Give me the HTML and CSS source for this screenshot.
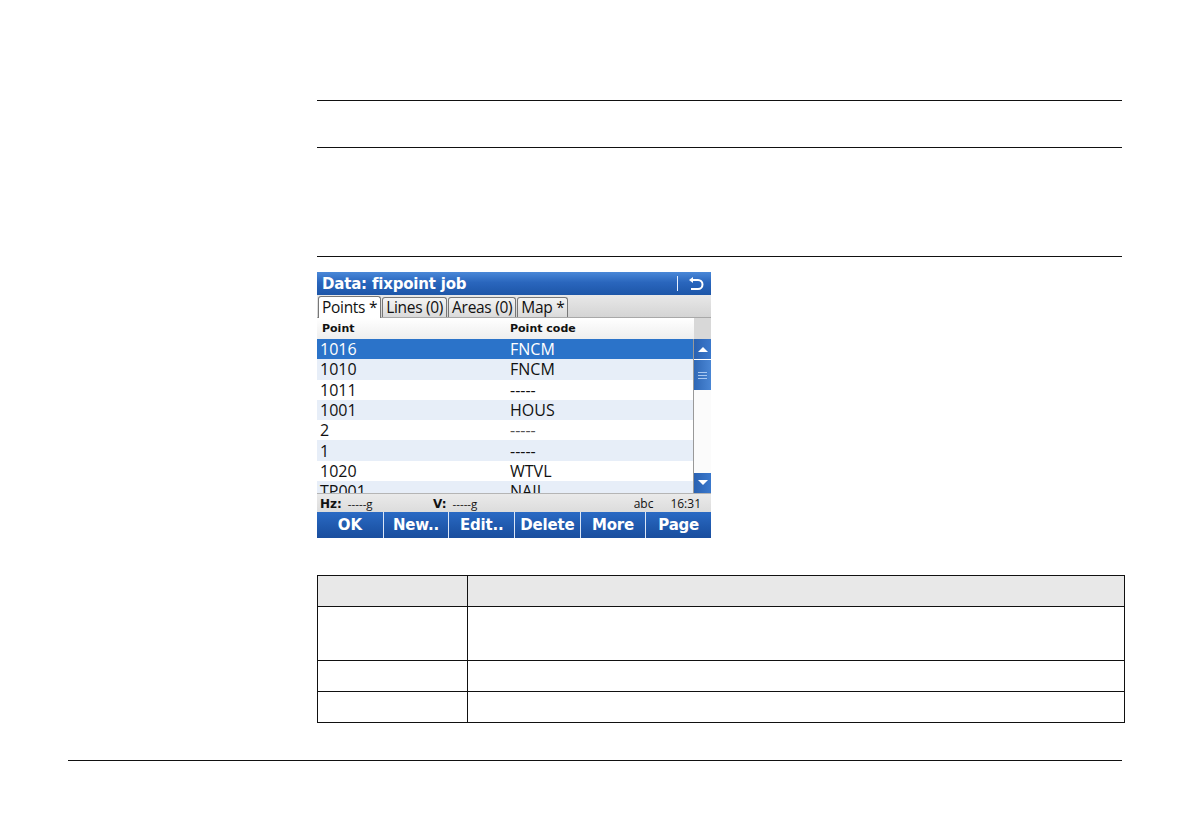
FILE: index.html
```html
<!DOCTYPE html>
<html>
<head>
<meta charset="utf-8">
<link rel="stylesheet" href="styles.css">
</head>
<body>
<div class="page">
  <div class="content">
    <div class="rule r1"></div>
    <div class="rule r2"></div>
    <div class="rule r3"></div>

    <div class="screen">
      <div class="titlebar">
        <span class="title">Data: fixpoint job</span>
        <span class="tsep"></span>
        <svg class="back" width="18" height="16" viewBox="0 0 18 16">
          <path d="M5 4 H12 A4.5 4.5 0 0 1 12 13 H5" fill="none" stroke="#fff" stroke-width="2"/>
          <path d="M3 4 L7 1 V7 Z" fill="#fff"/>
        </svg>
      </div>
      <div class="tabs">
        <span class="tab active">Points *</span>
        <span class="tab">Lines (0)</span>
        <span class="tab">Areas (0)</span>
        <span class="tab">Map *</span>
      </div>
      <div class="listhead">
        <span class="c1">Point</span>
        <span class="c2">Point code</span>
        <span class="sbhead"></span>
      </div>
      <div class="listbody">
        <div class="rows">
          <div class="row sel"><span class="c1">1016</span><span class="c2">FNCM</span></div>
          <div class="row alt"><span class="c1">1010</span><span class="c2">FNCM</span></div>
          <div class="row"><span class="c1">1011</span><span class="c2">-----</span></div>
          <div class="row alt"><span class="c1">1001</span><span class="c2">HOUS</span></div>
          <div class="row"><span class="c1">2</span><span class="c2 dim">-----</span></div>
          <div class="row alt"><span class="c1">1</span><span class="c2">-----</span></div>
          <div class="row"><span class="c1">1020</span><span class="c2">WTVL</span></div>
          <div class="row alt"><span class="c1">TP001</span><span class="c2">NAIL</span></div>
        </div>
        <div class="scrollbar">
          <div class="sbtn"><svg width="10" height="6" viewBox="0 0 10 6"><path d="M0 6 L5 1 L10 6 Z" fill="#fff"/></svg></div>
          <div class="thumb"><span></span><span></span><span></span></div>
          <div class="track"></div>
          <div class="sbtn"><svg width="10" height="6" viewBox="0 0 10 6"><path d="M0 0 L5 5 L10 0 Z" fill="#fff"/></svg></div>
        </div>
      </div>
      <div class="status">
        <span class="hz"><b>Hz:</b><span class="val">-----g</span></span>
        <span class="v"><b>V:</b><span class="val">-----g</span></span>
        <span class="abc">abc</span>
        <span class="time">16:31</span>
      </div>
      <div class="buttons">
        <span class="btn">OK</span>
        <span class="btn">New..</span>
        <span class="btn">Edit..</span>
        <span class="btn">Delete</span>
        <span class="btn">More</span>
        <span class="btn">Page</span>
      </div>
    </div>

    <table class="desc">
      <tr class="head"><td class="k"></td><td></td></tr>
      <tr class="tall"><td class="k"></td><td></td></tr>
      <tr><td class="k"></td><td></td></tr>
      <tr><td class="k"></td><td></td></tr>
    </table>
  </div>
  <div class="footrule"></div>
</div>
</body>
</html>
```

FILE: styles.css
```css
html, body {
  margin: 0;
  padding: 0;
  background: #fff;
}
body {
  width: 1190px;
  height: 840px;
  overflow: hidden;
  font-family: "Liberation Sans", Arial, sans-serif;
}
.page {
  padding-top: 100px;
}
.content {
  margin-left: 317px;
  width: 805px;
}
.rule {
  height: 1px;
  background: #111;
}
.r2 { margin-top: 46px; }
.r3 { margin-top: 108px; }

.screen {
  margin-top: 15px;
  width: 394px;
  height: 266px;
  display: flex;
  flex-direction: column;
  font-family: "Open Sans", "DejaVu Sans", sans-serif;
  background: #fff;
  overflow: hidden;
}
.titlebar {
  height: 23px;
  flex: none;
  background: linear-gradient(#4a88d8, #2a66bd 45%, #1d56a8);
  display: flex;
  align-items: center;
  color: #fff;
  padding-left: 5px;
}
.title {
  font-family: "DejaVu Sans", sans-serif;
  font-weight: bold;
  font-size: 15px;
  letter-spacing: -0.2px;
  flex: 1;
}
.tsep {
  width: 1px;
  height: 15px;
  background: #e8f0ff;
  margin-right: 8px;
}
.back {
  margin-right: 7px;
}
.tabs {
  height: 23px;
  flex: none;
  background: linear-gradient(#e8e8e8, #d4d4d4);
  display: flex;
  align-items: flex-end;
  padding-left: 1px;
  gap: 1px;
  border-bottom: 1px solid #a8a8a8;
  box-sizing: border-box;
}
.tab {
  height: 20px;
  box-sizing: border-box;
  border: 1px solid #777;
  border-bottom: none;
  border-radius: 3px 3px 0 0;
  padding: 0 3px;
  font-size: 15.5px;
  line-height: 19px;
  color: #111;
  background: linear-gradient(#f4f4f4, #dadada);
  letter-spacing: -0.3px;
}
.tab.active {
  height: 22px;
  background: #fff;
  margin-bottom: -1px;
  line-height: 21px;
}
.listhead {
  height: 21px;
  flex: none;
  display: flex;
  align-items: center;
  background: linear-gradient(#ffffff, #eeeeee);
  font-family: "DejaVu Sans", sans-serif;
  font-weight: bold;
  font-size: 11px;
  color: #111;
}
.listhead .c1 {
  width: 188px;
  padding-left: 5px;
}
.listhead .c2 {
  flex: 1;
}
.sbhead {
  width: 17px;
  align-self: stretch;
  background: #d8d8d8;
}
.listbody {
  height: 154px;
  flex: none;
  display: flex;
  overflow: hidden;
}
.rows {
  flex: 1;
  border-right: 1px solid #999;
}
.row {
  height: 20.3px;
  display: flex;
  align-items: center;
  font-size: 16px;
  color: #111;
  background: #fff;
}
.row.alt {
  background: #e7eef8;
}
.row.sel {
  background: #2b73c9;
  color: #fff;
}
.row .c1 {
  width: 190px;
  padding-left: 3px;
}
.row .c2.dim {
  color: #555;
}
.scrollbar {
  width: 17px;
  display: flex;
  flex-direction: column;
  background: #fff;
}
.sbtn {
  height: 20px;
  background: linear-gradient(90deg, #2a62b2, #3a78cc);
  display: flex;
  align-items: center;
  justify-content: center;
}
.thumb {
  height: 30px;
  margin-top: 1px;
  background: linear-gradient(90deg, #2f68b6, #4a86d4);
  display: flex;
  flex-direction: column;
  align-items: center;
  justify-content: center;
  gap: 2px;
}
.thumb span {
  width: 9px;
  height: 1px;
  background: #a9c8f0;
}
.track {
  flex: 1;
  background: #fbfbfb;
}
.status {
  height: 19px;
  flex: none;
  background: linear-gradient(#eaeaea, #dcdcdc);
  border-top: 1px solid #b5b5b5;
  box-sizing: border-box;
  display: flex;
  align-items: center;
  font-size: 11.5px;
  color: #111;
}
.status b {
  font-family: "DejaVu Sans", sans-serif;
  font-size: 12px;
}
.val {
  margin-left: 6px;
}
.hz {
  margin-left: 3px;
  width: 113px;
}
.v {
  flex: 1;
}
.abc {
  margin-right: 17px;
  font-size: 12px;
}
.time {
  margin-right: 10px;
  font-size: 12px;
}
.buttons {
  flex: 1;
  display: flex;
  background: linear-gradient(#2a6ac4, #1f58ac 60%, #1a4e9e);
}
.btn {
  width: 66px;
  display: flex;
  align-items: center;
  justify-content: center;
  color: #fff;
  font-family: "DejaVu Sans", sans-serif;
  font-weight: bold;
  font-size: 15px;
  letter-spacing: -0.2px;
  border-left: 1.5px solid #dbe6f6;
  box-sizing: border-box;
}
.btn:first-child {
  border-left: none;
}

.desc {
  margin-top: 37px;
  width: 808px;
  border-collapse: collapse;
}
.desc td {
  border: 1.5px solid #111;
  height: 30px;
  padding: 0;
}
.desc td.k {
  width: 149px;
}
.desc tr.head td {
  background: #e8e8e8;
  height: 30px;
}
.desc tr.tall td {
  height: 53px;
}
.footrule {
  margin-top: 37px;
  margin-left: 68px;
  width: 1054px;
  height: 1px;
  background: #111;
}
```
